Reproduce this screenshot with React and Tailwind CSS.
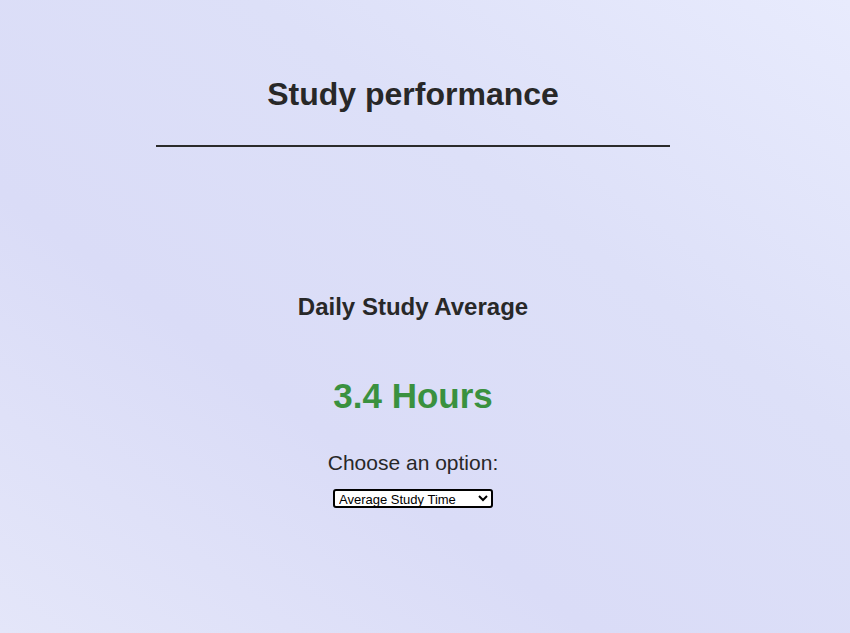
export default function App() {
  return (
    <div
      className="min-h-[633px] w-full bg-[linear-gradient(to_top_right,#e4e6f9_0%,#dadcf7_35%,#dde0f8_65%,#e8ebfd_100%)] text-[#282828]"
      style={{ fontFamily: '"Liberation Sans", Arial, sans-serif' }}
    >
      <div className="w-[826px] flex flex-col items-center">
        <h1 className="mt-[77px] h-[34px] text-[32px] leading-[34px] font-bold">
          Study performance
        </h1>
        <div className="mt-[34px] h-[2px] w-[514px] bg-[#2b2b2b]" />
        <h2 className="mt-[146px] h-[28px] text-[24px] leading-[28px] font-bold">
          Daily Study Average
        </h2>
        <div className="mt-[55px] h-[40px] text-[35px] leading-[40px] font-bold text-[#3a913f]">
          3.4 Hours
        </div>
        <div className="mt-[35px] h-[24px] text-[21px] leading-[24px]">
          Choose an option:
        </div>
        <select
          defaultValue="avg"
          className="mt-[14px] h-[19px] w-[160px] rounded-[3px] border-2 border-black bg-white text-[13px] text-black"
          style={{ fontFamily: 'Arial, "Liberation Sans", sans-serif' }}
        >
          <option value="avg">Average Study Time</option>
          <option value="total">Total Study Time</option>
        </select>
      </div>
    </div>
  );
}
